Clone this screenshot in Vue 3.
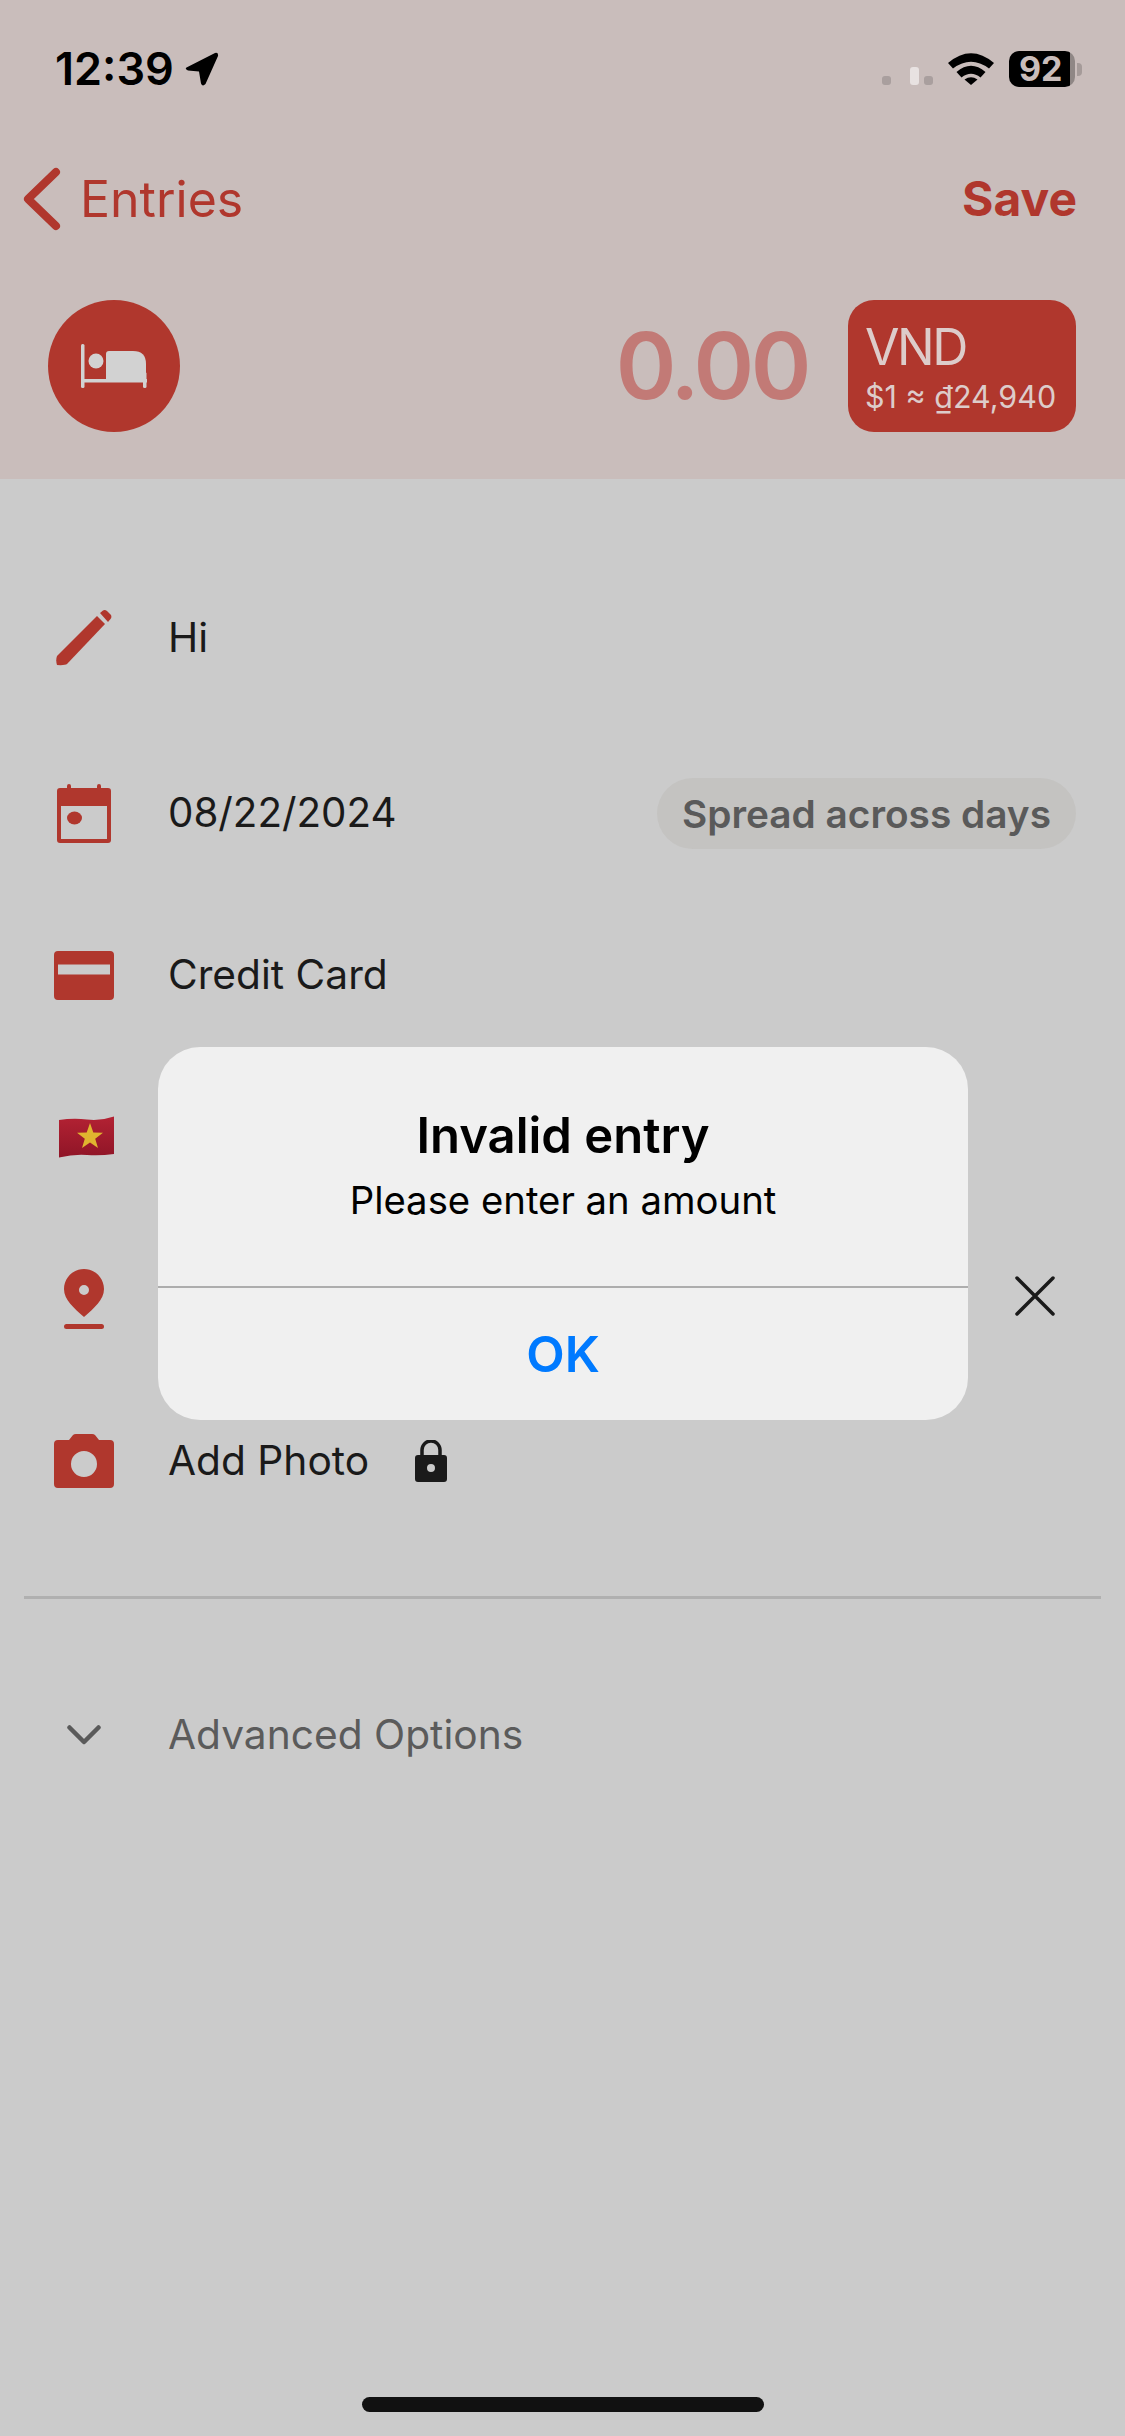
<template>
  <div class="screen">
    <header class="top">
      <div class="status">
        <div class="status__left">
          <span class="status__time">12:39</span>
          <svg class="status__arrow" width="34" height="34" viewBox="0 0 34 34">
            <path d="M1.500 15.500 L30 1 Q33.500 0 33 4 L20.500 32 Q17.500 35 16 31.500 L14 19.500 L3 18.500 Q-0.500 17 1.500 15.500 Z" fill="#000" />
          </svg>
        </div>
        <div class="status__right">
          <div class="cell">
            <span class="cell__dot"></span>
            <span class="cell__bar"></span>
            <span class="cell__dot"></span>
          </div>
          <svg class="wifi" width="46" height="33" viewBox="0 0 46 33">
            <path d="M0 11 Q23 -8.500 46 11 L41 16.500 Q23 3 5 16.500 Z" fill="#000" />
            <path d="M8.500 20 Q23 7.500 37.500 20 L32.500 25.500 Q23 18 13.500 25.500 Z" fill="#000" />
            <path d="M16.500 27.500 Q23 23 29.500 27.500 L23 33 Z" fill="#000" />
          </svg>
          <div class="battery">
            <div class="battery__body">92</div>
            <span class="battery__nub"></span>
          </div>
        </div>
      </div>

      <nav class="nav">
        <div class="nav__back">
          <svg width="40" height="64" viewBox="0 0 40 64">
            <path d="M34 5 L6 32 L34 59" fill="none" stroke="#b0372d" stroke-width="8" stroke-linecap="round" stroke-linejoin="round" />
          </svg>
          <span>Entries</span>
        </div>
        <span class="nav__save">Save</span>
      </nav>

      <div class="summary">
        <div class="summary__cat">
          <svg width="66" height="44" viewBox="0 0 66 44" fill="#d2d2d2">
            <rect x="0" y="0" width="3.500" height="44" rx="1.500" />
            <rect x="0" y="35" width="66" height="3.500" />
            <rect x="62" y="28" width="3.500" height="16" rx="1.500" />
            <circle cx="15" cy="17" r="7.500" />
            <path d="M25 10 Q25 7 28 7 L52 7 Q65 7 65 20 L65 36 L25 36 Z" />
          </svg>
        </div>
        <span class="summary__amount">0.00</span>
        <div class="summary__currency">
          <span class="summary__code">VND</span>
          <span class="summary__rate">$1 ≈ ₫24,940</span>
        </div>
      </div>
    </header>

    <main class="form">
      <div class="row row--first">
        <div class="row__icon">
          <svg width="56" height="56" viewBox="0 0 56 56" fill="#b0372d">
            <path d="M1 46 L41 6 L49 14 L11 54 Q9 55.500 1 55 Q-0.500 50 1 46 Z" />
            <path d="M44 3 L47 0.500 Q49 -0.500 51 1 L55 5 Q56 7.500 54.500 9 L52 12 Z" />
          </svg>
        </div>
        <span class="row__text">Hi</span>
      </div>

      <div class="row">
        <div class="row__icon">
          <svg width="54" height="59" viewBox="0 0 54 59">
            <path fill-rule="evenodd" fill="#b0372d" d="M10 4 V2 Q10 0 12 0 Q14 0 14 2 V4 H40 V2 Q40 0 42 0 Q44 0 44 2 V4 H51 Q54 4 54 7 V56 Q54 59 51 59 H3 Q0 59 0 56 V7 Q0 4 3 4 Z M4 22 V55 H50 V22 Z" />
            <ellipse cx="17.500" cy="34" rx="7.500" ry="6.500" fill="#b0372d" />
          </svg>
        </div>
        <span class="row__text row__text--date">08/22/2024</span>
        <span class="pill">Spread across days</span>
      </div>

      <div class="row">
        <div class="row__icon">
          <svg width="60" height="49" viewBox="0 0 60 49">
            <path fill-rule="evenodd" fill="#b0372d" d="M4 0 H56 Q60 0 60 4 V45 Q60 49 56 49 H4 Q0 49 0 45 V4 Q0 0 4 0 Z M4 13.500 V23.500 H56 V13.500 Z" />
          </svg>
        </div>
        <span class="row__text">Credit Card</span>
      </div>

      <div class="row">
        <div class="row__icon row__icon--flag">
          <svg width="56" height="42" viewBox="0 0 56 42">
            <defs>
              <linearGradient id="flagRed" x1="0" y1="0" x2="0" y2="1">
                <stop offset="0" stop-color="#b32233" />
                <stop offset="1" stop-color="#8f1527" />
              </linearGradient>
            </defs>
            <path d="M0 4 Q14 2 28 3.500 T55 0.500 V38 Q41 40 28 39 T0 41.500 Z" fill="url(#flagRed)" />
            <path d="M31 7 L34.300 16.500 L44 16.700 L36.200 22.700 L39 32 L31 26.500 L23 32 L25.800 22.700 L18 16.700 L27.700 16.500 Z" fill="#e0b52f" />
          </svg>
        </div>
      </div>

      <div class="row">
        <div class="row__icon">
          <svg width="40" height="60" viewBox="0 0 40 60">
            <path fill-rule="evenodd" fill="#b0372d" d="M20 0 C31 0 40 9 40 20 C40 31 30 39 20 48 C10 39 0 31 0 20 C0 9 9 0 20 0 Z M20 16 A5 5 0 1 0 20 26 A5 5 0 1 0 20 16 Z" />
            <rect x="0" y="55" width="40" height="5" rx="2.500" fill="#b0372d" />
          </svg>
        </div>
        <svg class="row__clear" width="40" height="40" viewBox="0 0 40 40">
          <path d="M2 2 L38 38 M38 2 L2 38" fill="none" stroke="#1a1a1a" stroke-width="3.500" stroke-linecap="round" />
        </svg>
      </div>

      <div class="row">
        <div class="row__icon">
          <svg width="60" height="54" viewBox="0 0 60 54">
            <path fill-rule="evenodd" fill="#b0372d" d="M4 6 H15 L19 1 Q20 0 22 0 H38 Q40 0 41 1 L45 6 H56 Q60 6 60 10 V50 Q60 54 56 54 H4 Q0 54 0 50 V10 Q0 6 4 6 Z M30 17 A13 13 0 1 0 30 43 A13 13 0 1 0 30 17 Z" />
          </svg>
        </div>
        <span class="row__text">Add Photo</span>
        <svg class="row__lock" width="32" height="42" viewBox="0 0 32 42">
          <path fill-rule="evenodd" fill="#1a1a1a" d="M3 15 H29 Q32 15 32 18 V39 Q32 42 29 42 H3 Q0 42 0 39 V18 Q0 15 3 15 Z M16 24 A4 4 0 1 0 16 32 A4 4 0 1 0 16 24 Z" />
          <path d="M7 16 V10 A9 9 0 0 1 25 10 V16" fill="none" stroke="#1a1a1a" stroke-width="3.500" />
        </svg>
      </div>

      <div class="divider"></div>

      <div class="row row--advanced">
        <div class="row__icon">
          <svg width="34" height="20" viewBox="0 0 34 20">
            <path d="M2.500 2.500 L17 17 L31.500 2.500" fill="none" stroke="#5a5a5a" stroke-width="4.500" stroke-linecap="round" stroke-linejoin="round" />
          </svg>
        </div>
        <span class="row__text row__text--muted">Advanced Options</span>
      </div>
    </main>

    <div class="home-bar"></div>

    <div class="alert">
      <div class="alert__body">
        <h2 class="alert__title">Invalid entry</h2>
        <p class="alert__message">Please enter an amount</p>
      </div>
      <button class="alert__action">OK</button>
    </div>
  </div>
</template>

<script setup>
</script>

<style>
body {
  background: #cbcbcb;
}
</style>

<style scoped>
.screen {
  position: relative;
  display: flex;
  flex-direction: column;
  width: 1125px;
  height: 2436px;
  overflow: hidden;
  background: #cbcbcb;
  font-family: Inter, 'Liberation Sans', sans-serif;
  color: #1a1a1a;
}
.top {
  height: 479px;
  background: #c9bdbb;
}
.status {
  display: flex;
  justify-content: space-between;
  align-items: center;
  height: 70px;
  padding: 34px 43px 0 55px;
}
.status__left {
  display: flex;
  align-items: center;
  gap: 11px;
}
.status__time {
  font-size: 45px;
  font-weight: 600;
  line-height: 52px;
  color: #000;
}
.status__right {
  display: flex;
  align-items: center;
}
.cell {
  display: flex;
  align-items: flex-end;
  height: 18px;
  margin-right: 15px;
  margin-top: 14px;
}
.cell__dot {
  width: 9px;
  height: 9px;
  border-radius: 3px;
  background: #a99f9e;
}
.cell__bar {
  width: 9px;
  height: 18px;
  border-radius: 3px;
  background: #e8e2e1;
  margin: 0 5px 0 19px;
}
.wifi {
  margin-right: 15px;
  margin-top: -2px;
}
.battery {
  display: flex;
  align-items: center;
  gap: 2px;
}
.battery__body {
  width: 66px;
  height: 36px;
  border-radius: 10px;
  background: linear-gradient(to right, #000 92%, #8f8785 92%);
  color: #c9bdbb;
  font-size: 34px;
  font-weight: 700;
  line-height: 36px;
  padding-left: 10px;
  box-sizing: border-box;
}
.battery__nub {
  width: 5px;
  height: 13px;
  border-radius: 0 4px 4px 0;
  background: #a59b99;
}
.nav {
  display: flex;
  justify-content: space-between;
  align-items: center;
  height: 64px;
  padding: 63px 48px 0 22px;
}
.nav__back {
  display: flex;
  align-items: center;
  gap: 18px;
  font-size: 50px;
  line-height: 64px;
  color: #b0372d;
}
.nav__save {
  font-size: 48px;
  font-weight: 700;
  line-height: 64px;
  color: #b0372d;
}
.summary {
  display: flex;
  align-items: center;
  height: 132px;
  margin-top: 69px;
  padding: 0 49px 0 48px;
}
.summary__cat {
  display: flex;
  justify-content: center;
  align-items: center;
  width: 132px;
  height: 132px;
  border-radius: 50%;
  background: #b0372d;
  margin-right: auto;
}
.summary__amount {
  font-size: 92px;
  font-weight: 600;
  letter-spacing: -3.500px;
  line-height: 1;
  color: #c27a76;
  margin-right: 40px;
}
.summary__currency {
  display: flex;
  flex-direction: column;
  justify-content: center;
  width: 228px;
  height: 132px;
  padding: 8px 0 0 17px;
  box-sizing: border-box;
  border-radius: 26px;
  background: #b0372d;
  color: #ddccca;
}
.summary__code {
  font-size: 50px;
  letter-spacing: -2.500px;
  line-height: 58px;
  margin-top: -4px;
}
.summary__rate {
  font-size: 30.500px;
  line-height: 42px;
}
.form {
  display: flex;
  flex-direction: column;
  padding-top: 78px;
}
.row {
  display: flex;
  align-items: center;
  height: 162px;
  padding-right: 49px;
}
.row--first {
  margin-bottom: 13px;
}
.row--advanced {
  height: 76px;
  margin-top: 98px;
}
.row__icon {
  display: flex;
  justify-content: center;
  align-items: center;
  width: 168px;
  flex-shrink: 0;
}
.row__icon--flag {
  padding-left: 6px;
  box-sizing: border-box;
}
.row__text {
  font-size: 40.700px;
  line-height: 48px;
  color: #1a1a1a;
}
.row__text--date {
  font-size: 40.300px;
}
.row__text--muted {
  color: #5b5b5b;
}
.row__lock {
  margin-left: 46px;
}
.row__clear {
  margin-left: auto;
  margin-right: 21px;
  margin-bottom: 6px;
}
.pill {
  margin-left: auto;
  padding: 0 25px;
  height: 71px;
  border-radius: 36px;
  background: #c4c3c1;
  color: #5a5a5a;
  font-size: 38.800px;
  font-weight: 600;
  line-height: 71px;
}
.divider {
  height: 3px;
  margin: 54px 24px 0;
  background: #b0b0b0;
}
.home-bar {
  position: absolute;
  left: 362px;
  bottom: 24px;
  width: 402px;
  height: 15px;
  border-radius: 8px;
  background: #111;
}
.alert {
  position: absolute;
  top: 1047px;
  left: 158px;
  width: 810px;
  height: 373px;
  display: flex;
  flex-direction: column;
  border-radius: 42px;
  background: #f0f0f0;
}
.alert__body {
  height: 241px;
  box-sizing: border-box;
  padding-top: 59px;
  border-bottom: 2px solid #adadad;
  text-align: center;
}
.alert__title {
  margin: 0;
  font-size: 49px;
  font-weight: 600;
  line-height: 60px;
  color: #000;
}
.alert__message {
  margin: 11px 0 0;
  font-size: 38.300px;
  line-height: 46px;
  color: #000;
}
.alert__action {
  flex: 1;
  border: 0;
  padding: 0;
  background: none;
  font-family: inherit;
  font-size: 50px;
  font-weight: 600;
  color: #007aff;
}
</style>
